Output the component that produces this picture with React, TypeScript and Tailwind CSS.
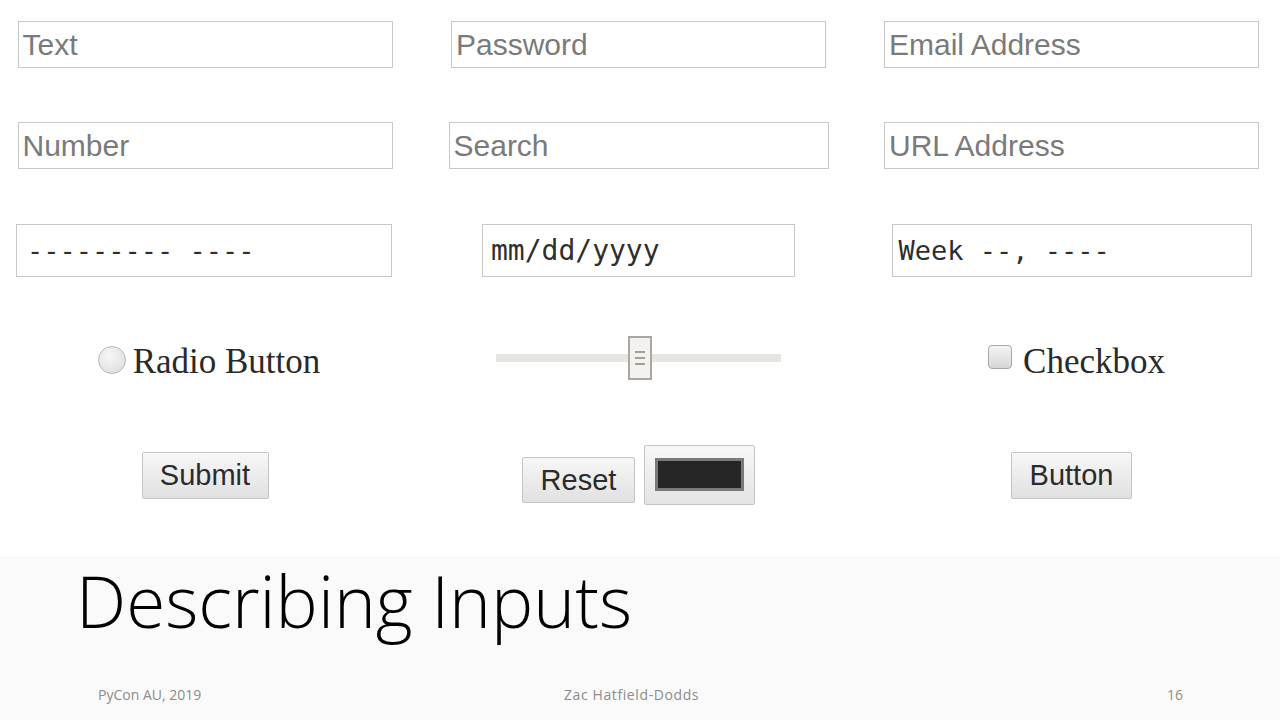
import React from 'react';

const sans = { fontFamily: '"Liberation Sans", Arial, sans-serif' };
const serif = { fontFamily: '"Liberation Serif", "Times New Roman", serif' };
const mono = { fontFamily: '"DejaVu Sans Mono", "Liberation Mono", monospace' };
const slide = { fontFamily: '"Open Sans", "Noto Sans", sans-serif' };

const rowCols = 'grid grid-cols-[410px_457px_409px] justify-items-center';

function TextBox({ label, w = 'w-[375px]' }: { label: string; w?: string }) {
  return (
    <div className={`${w} h-full border border-[#c8c8c8] bg-white flex items-center pl-[4px]`}>
      <span className="text-[30px] leading-none text-[#7a7a7a]" style={sans}>{label}</span>
    </div>
  );
}

function MonoBox({ text, w, pl, size = 'text-[28px]' }: { text: string; w: string; pl: string; size?: string }) {
  return (
    <div className={`${w} h-full border border-[#c8c8c8] bg-white flex items-center ${pl}`}>
      <span className={`${size} leading-none text-[#2e2e2e] whitespace-pre`} style={mono}>{text}</span>
    </div>
  );
}

function GrayButton({ label, w, h }: { label: string; w: string; h: string }) {
  return (
    <div className={`${w} ${h} border border-[#c4c4c4] rounded-[2px] bg-gradient-to-b from-[#f7f7f7] to-[#e1e1e1] flex items-center justify-center`}>
      <span className="text-[29px] leading-none text-[#2b2b2b]" style={sans}>{label}</span>
    </div>
  );
}

export default function App() {
  return (
    <div className="w-[1280px] h-[720px] flex flex-col overflow-hidden">
      <div className="h-[556px] bg-white pt-[21px]">
        {/* row 1 */}
        <div className={`${rowCols} h-[47px]`}>
          <TextBox label="Text" />
          <TextBox label="Password" />
          <TextBox label="Email Address" />
        </div>
        {/* row 2 */}
        <div className={`${rowCols} h-[47px] mt-[54px]`}>
          <TextBox label="Number" />
          <TextBox label="Search" w="w-[380px]" />
          <TextBox label="URL Address" />
        </div>
        {/* row 3 */}
        <div className={`${rowCols} h-[53px] mt-[55px]`}>
          <MonoBox text="--------- ----" w="w-[376px] ml-[-2px]" pl="pl-[10px]" size="text-[27px]" />
          <MonoBox text="mm/dd/yyyy" w="w-[313px]" pl="pl-[8px]" />
          <MonoBox text="Week --, ----" w="w-[360px]" pl="pl-[6px]" size="text-[27px]" />
        </div>
        {/* row 4 */}
        <div className={`${rowCols} h-[44px] mt-[59px] items-center`}>
          <div className="flex items-center gap-[7px] ml-[8px] mt-[7px]">
            <div className="w-[28px] h-[28px] rounded-full border border-[#b8b8b8] bg-[radial-gradient(circle_at_40%_35%,#f7f7f7,#d9d9d9)] mb-[4px]" />
            <span className="text-[35px] leading-none text-[#2a2a2a]" style={serif}>Radio Button</span>
          </div>
          <div className="relative w-[285px] h-[44px] flex items-center">
            <div className="w-full h-[8px] bg-[#e6e5e1]" />
            <div className="absolute left-[132px] top-0 w-[24px] h-[44px] border-2 border-[#aaa7a1] bg-[#f3f2ef] flex flex-col items-center justify-center gap-[4px]">
              <div className="w-[10px] h-[2px] bg-[#a4a19b]" />
              <div className="w-[10px] h-[2px] bg-[#a4a19b]" />
              <div className="w-[10px] h-[2px] bg-[#a4a19b]" />
            </div>
          </div>
          <div className="flex items-center gap-[11px] ml-[10px] mt-[7px]">
            <div className="w-[24px] h-[24px] rounded-[4px] border border-[#a8a8a8] bg-gradient-to-b from-[#f4f4f4] to-[#d6d6d6] mb-[10px]" />
            <span className="text-[35px] leading-none text-[#2a2a2a]" style={serif}>Checkbox</span>
          </div>
        </div>
        {/* row 5 */}
        <div className={`${rowCols} h-[60px] mt-[65px] items-center`}>
          <GrayButton label="Submit" w="w-[127px]" h="h-[47px]" />
          <div className="flex items-end gap-[9px] h-full">
            <div className="mb-[2px]">
              <GrayButton label="Reset" w="w-[113px]" h="h-[46px]" />
            </div>
            <div className="w-[111px] h-[60px] border border-[#c4c4c4] rounded-[2px] bg-gradient-to-b from-[#f7f7f7] to-[#e4e4e4] flex items-center justify-center pb-[1px]">
              <div className="w-[89px] h-[33px] border-[3px] border-[#7a7a7a] bg-[#262626]" />
            </div>
          </div>
          <GrayButton label="Button" w="w-[121px]" h="h-[47px]" />
        </div>
      </div>

      <div className="flex-1 bg-[#fafafa] flex flex-col" style={slide}>
        <h1 className="pl-[76px] pt-[2px] text-[71px] leading-[86px] font-light text-black tracking-normal">
          Describing Inputs
        </h1>
        <div className="mt-auto mb-[15px] flex items-center text-[14px] text-[#8c8c8c] pl-[98px] pr-[97px]">
          <span className="w-[466px]">PyCon AU, 2019</span>
          <span className="tracking-[0.6px]">Zac Hatfield-Dodds</span>
          <span className="ml-auto">16</span>
        </div>
      </div>
    </div>
  );
}
